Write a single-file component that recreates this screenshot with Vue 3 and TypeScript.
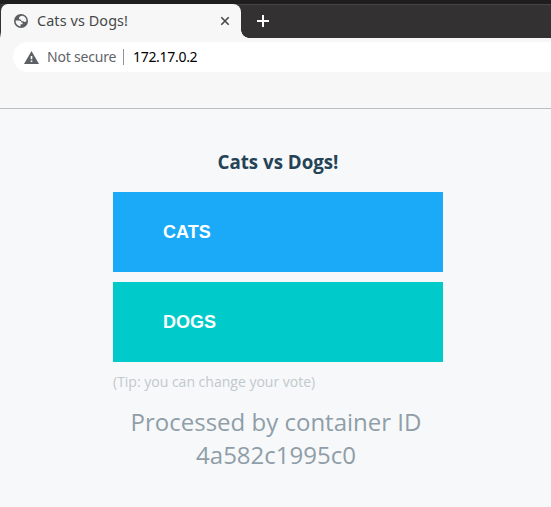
<script setup lang="ts">
import { ref } from 'vue'

interface Choice {
  id: string
  label: string
}

const title = 'Cats vs Dogs!'
const address = '172.17.0.2'
const containerId = '4a582c1995c0'
const choices: Choice[] = [
  { id: 'a', label: 'CATS' },
  { id: 'b', label: 'DOGS' },
]
const vote = ref('')
</script>

<template>
  <div class="window">
    <div class="frame"></div>
    <header class="tabs">
      <div class="tab">
        <svg class="globe" width="14" height="14" viewBox="0 0 14 14">
          <circle cx="7" cy="7" r="7" fill="#5a5d61" />
          <path d="M8.6 1.8C6.2 1.9 5 2.9 5 4.2C5 5.2 5.7 5.5 6.8 5.5C7.1 6.9 8 7.4 9.4 7.3C10.2 8.2 11.2 8.2 12.4 7.2A5.5 5.5 0 0 0 8.6 1.8Z" fill="#f7f7f7" />
          <path d="M1.6 6.6H4.6C6.6 6.7 7.3 7.3 7.4 8.5H8.6V10.3H6.5V12.4A5.5 5.5 0 0 1 1.6 6.6Z" fill="#f7f7f7" />
        </svg>
        <span class="tab-title">{{ title }}</span>
        <svg class="close" width="10" height="10" viewBox="0 0 10 10">
          <path d="M1.3 1.3L8.7 8.7M8.7 1.3L1.3 8.7" stroke="#454749" stroke-width="1.6" />
        </svg>
      </div>
      <div class="new-tab">
        <svg width="12" height="12" viewBox="0 0 12 12">
          <path d="M6 0V12M0 6H12" stroke="#fff" stroke-width="2" />
        </svg>
      </div>
    </header>
    <div class="toolbar">
      <div class="omnibox">
        <svg class="warning" width="15" height="13" viewBox="0 0 15 13">
          <path d="M7.5 0L15 13H0Z" fill="#5d6064" />
          <path d="M6.7 5H8.3V8.3H6.7ZM6.7 9.5H8.3V11H6.7Z" fill="#fff" />
        </svg>
        <span class="security">Not secure</span>
        <span class="separator"></span>
        <span class="address">{{ address }}</span>
      </div>
    </div>
    <main class="page">
      <h3>{{ title }}</h3>
      <div class="choices">
        <button
          v-for="choice in choices"
          :key="choice.id"
          :class="['choice', choice.id]"
          @click="vote = choice.id"
        >{{ choice.label }}</button>
      </div>
      <div class="tip">(Tip: you can change your vote)</div>
      <div class="hostname">Processed by container ID {{ containerId }}</div>
    </main>
  </div>
</template>

<style>
body {
  background: #f7f8f9;
}
</style>

<style scoped>
.window {
  height: 507px;
  display: flex;
  flex-direction: column;
  overflow: hidden;
  font-family: "Open Sans", "Noto Sans", sans-serif;
}
.frame {
  height: 4px;
  background: #1e1e1e;
}
.tabs {
  height: 34px;
  box-sizing: border-box;
  display: flex;
  padding-left: 1px;
  background: linear-gradient(90deg, transparent 1px, #454445 1px) 0 0 / 100% 1px no-repeat, linear-gradient(#333132 0 28px, #f7f7f7 34px) 0 0 / 1px 100% no-repeat, #333132;
}
.tab {
  width: 240px;
  box-sizing: border-box;
  display: flex;
  align-items: center;
  padding: 0 11px 0 13px;
  background: #f7f7f7;
  border-radius: 7px 8px 0 0;
  position: relative;
}
.tab::after {
  content: "";
  position: absolute;
  left: 100%;
  bottom: 0;
  width: 8px;
  height: 8px;
  background: radial-gradient(circle at 8px 0, transparent 7.5px, #f7f7f7 8px);
}
.tab-title {
  margin-left: 9px;
  font-family: "Noto Sans", sans-serif;
  font-size: 14.4px;
  line-height: 20px;
  letter-spacing: 0.1px;
  color: #454749;
  white-space: nowrap;
}
.close {
  margin-left: auto;
}
.new-tab {
  padding: 11px 16px;
  line-height: 0;
}
.toolbar {
  height: 71px;
  box-sizing: border-box;
  padding: 4px 0 0 13px;
  background: #f7f7f7;
  border-bottom: 1px solid #bdbdbd;
}
.omnibox {
  height: 30px;
  display: flex;
  align-items: center;
  padding-left: 11px;
  background: #fff;
  border-radius: 15px 0 0 15px;
  font-family: "Noto Sans", sans-serif;
  font-size: 14px;
  line-height: 20px;
  white-space: nowrap;
}
.security {
  margin-left: 8px;
  width: 70px;
  letter-spacing: -0.2px;
  color: #5f6368;
}
.separator {
  width: 1px;
  height: 16px;
  margin: 0 9px 0 6px;
  background: #919396;
}
.address {
  letter-spacing: -0.3px;
  color: #000;
}
.page {
  flex: 1;
  width: 330px;
  margin-left: 113px;
  background: #f7f8f9;
}
h3 {
  margin: 40px 0 17px;
  font-size: 18.72px;
  line-height: 26px;
  font-weight: 700;
  text-align: center;
  color: #254356;
}
.choices {
  display: flex;
  flex-direction: column;
  gap: 10px;
}
.choice {
  height: 80px;
  padding: 0 0 0 50px;
  border: 0;
  text-align: left;
  font-family: "Liberation Sans", Arial, sans-serif;
  font-size: 18px;
  font-weight: 700;
  color: #fff;
}
.a {
  background: #1aaaf8;
}
.b {
  background: #00cbca;
}
.tip {
  margin-top: 10px;
  font-size: 14px;
  line-height: 20px;
  color: #c0c9ce;
}
.hostname {
  width: 326px;
  margin-top: 13px;
  font-size: 24px;
  line-height: 33px;
  text-align: center;
  color: #8f9ea8;
}
</style>
